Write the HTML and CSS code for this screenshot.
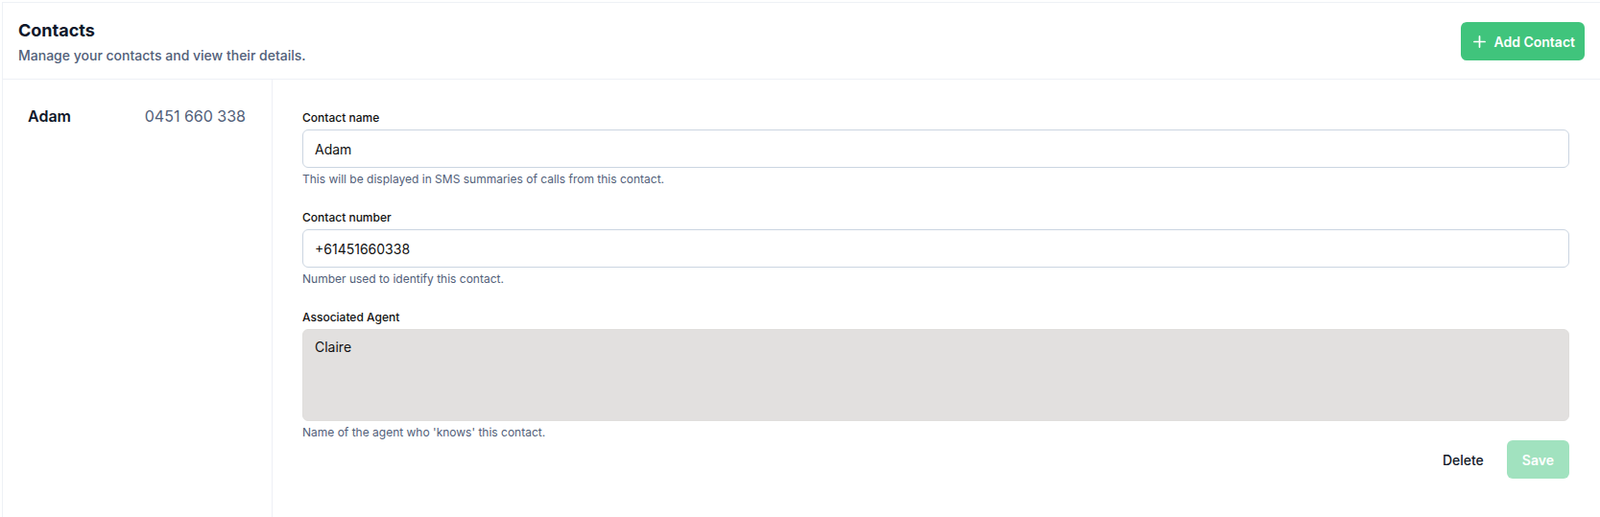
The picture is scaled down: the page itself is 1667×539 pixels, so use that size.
FILE: index.html
```html
<!DOCTYPE html>
<html lang="en">
<head>
<meta charset="utf-8">
<title>Contacts</title>
<link rel="stylesheet" href="styles.css">
</head>
<body>
<div class="frame">
  <header class="page-header">
    <div class="heading">
      <h1 class="title">Contacts</h1>
      <p class="subtitle">Manage your contacts and view their details.</p>
    </div>
    <button class="btn-add" type="button">
      <svg class="plus" width="13" height="13" viewBox="0 0 13 13" fill="none" stroke="currentColor" stroke-width="1.7" stroke-linecap="round"><path d="M6.5 0.9v11.2M0.9 6.5h11.2"/></svg>
      <span>Add Contact</span>
    </button>
  </header>
  <div class="content">
    <aside class="sidebar">
      <div class="contact-row">
        <span class="contact-name">Adam</span>
        <span class="contact-phone">0451 660 338</span>
      </div>
    </aside>
    <main class="form">
      <div class="field">
        <label class="label">Contact name</label>
        <input class="input" type="text" value="Adam">
        <p class="help">This will be displayed in SMS summaries of calls from this contact.</p>
      </div>
      <div class="field">
        <label class="label">Contact number</label>
        <input class="input" type="text" value="+61451660338">
        <p class="help">Number used to identify this contact.</p>
      </div>
      <div class="field last">
        <label class="label">Associated Agent</label>
        <textarea class="textarea" readonly>Claire</textarea>
        <p class="help">Name of the agent who 'knows' this contact.</p>
      </div>
      <div class="actions">
        <button class="btn-delete" type="button">Delete</button>
        <button class="btn-save" type="button">Save</button>
      </div>
    </main>
  </div>
</div>
</body>
</html>
```

FILE: styles.css
```css
* { box-sizing: border-box; }

html, body {
  margin: 0;
  padding: 0;
  background: #ffffff;
}

body {
  font-family: Inter, "Noto Sans", "Liberation Sans", sans-serif;
  color: #0f172a;
}

.frame {
  margin: 2px 0 0 2px;
  height: calc(100vh - 2px);
  border-top: 1px solid #eef1f6;
  border-left: 1px solid #eef1f6;
  display: flex;
  flex-direction: column;
}

.page-header {
  display: flex;
  justify-content: space-between;
  align-items: center;
  padding: 15px 16px 14px 16px;
  border-bottom: 1px solid #edf0f5;
}

.title {
  margin: 0;
  font-size: 18px;
  line-height: 28px;
  font-weight: 700;
  color: #0f172a;
}

.subtitle {
  margin: 2px 0 0 0;
  font-size: 14px;
  line-height: 20px;
  font-weight: 500;
  color: #526079;
}

.btn-add {
  display: flex;
  align-items: center;
  gap: 8px;
  height: 40px;
  padding: 0 10px 0 13px;
  border: none;
  border-radius: 6px;
  background: #40c47c;
  color: #ffffff;
  font-family: inherit;
  font-size: 14px;
  font-weight: 600;
  cursor: pointer;
}

.plus { display: block; }

.content {
  flex: 1;
  display: flex;
  min-height: 0;
}

.sidebar {
  width: 281px;
  flex: none;
  border-right: 1px solid #eef0f5;
  padding-top: 26px;
}

.contact-row {
  display: flex;
  justify-content: space-between;
  align-items: center;
  padding: 0 27px 0 26px;
  font-size: 16px;
  line-height: 24px;
}

.contact-name {
  font-weight: 600;
  color: #0f172a;
}

.contact-phone {
  font-weight: 400;
  color: #526079;
}

.form {
  flex: 1;
  padding: 32px 32px 0 31px;
}

.field { margin-bottom: 24px; }
.field.last { margin-bottom: 0; }

.label {
  display: block;
  font-size: 12px;
  line-height: 16px;
  font-weight: 500;
  color: #111111;
  margin-bottom: 4px;
}

.input {
  display: block;
  width: 100%;
  height: 40px;
  padding: 0 12px;
  border: 1px solid #cbd5e1;
  border-radius: 6px;
  font-family: inherit;
  font-size: 14px;
  color: #111111;
  background: #ffffff;
  outline: none;
}

.textarea {
  display: block;
  width: 100%;
  height: 96px;
  padding: 8px 12px;
  border: 1px solid #e0dedc;
  border-radius: 6px;
  background: #e2e0df;
  font-family: inherit;
  font-size: 14px;
  line-height: 20px;
  color: #111111;
  resize: none;
  outline: none;
}

.help {
  margin: 4px 0 0 0;
  font-size: 12px;
  line-height: 16px;
  color: #526079;
}

.actions {
  display: flex;
  justify-content: flex-end;
  gap: 8px;
}

.btn-delete {
  height: 40px;
  padding: 0 16px;
  border: none;
  border-radius: 6px;
  background: transparent;
  font-family: inherit;
  font-size: 14px;
  font-weight: 500;
  color: #111827;
  cursor: pointer;
}

.btn-save {
  height: 40px;
  padding: 0 16px;
  border: none;
  border-radius: 6px;
  background: #a1e2bf;
  color: #ffffff;
  font-family: inherit;
  font-size: 14px;
  font-weight: 600;
  cursor: pointer;
}
```
